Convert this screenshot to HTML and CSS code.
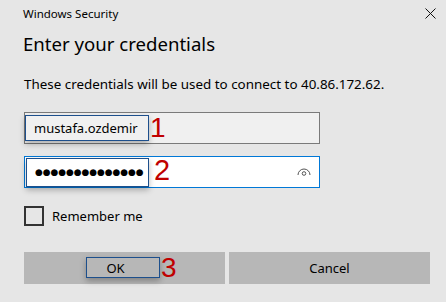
FILE: index.html
```html
<!DOCTYPE html>
<html>
<head>
  <meta charset="utf-8">
  <title>Windows Security</title>
  <link rel="stylesheet" href="styles.css">
</head>
<body>
  <div class="dialog">
    <div class="titlebar">
      <span>Windows Security</span>
      <svg class="close" width="11" height="11" viewBox="0 0 11 11">
        <path d="M0.5 0.5 L10.5 10.5 M10.5 0.5 L0.5 10.5" stroke="#111" stroke-width="1"/>
      </svg>
    </div>

    <h1>Enter your credentials</h1>
    <p class="msg">These credentials will be used to connect to 40.86.172.62.</p>

    <div class="field user">
      <span class="value">mustafa.ozdemir</span>
      <span class="mark mark-user"></span>
      <span class="num num-1">1</span>
    </div>

    <div class="field pass">
      <span class="value dots">&#9679;&#9679;&#9679;&#9679;&#9679;&#9679;&#9679;&#9679;&#9679;&#9679;&#9679;&#9679;&#9679;&#9679;</span>
      <svg class="eye" width="14" height="9" viewBox="0 0 14 9">
        <path d="M1 8 A6 6 0 0 1 13 8" fill="none" stroke="#555" stroke-width="1"/>
        <circle cx="7" cy="6.5" r="1.8" fill="none" stroke="#555" stroke-width="1"/>
      </svg>
      <span class="mark mark-pass"></span>
      <span class="num num-2">2</span>
    </div>

    <label class="remember">
      <span class="box"></span>
      Remember me
    </label>

    <div class="buttons">
      <button class="btn ok">OK
        <span class="mark mark-ok"></span>
        <span class="num num-3">3</span>
      </button>
      <button class="btn">Cancel</button>
    </div>
  </div>
</body>
</html>
```

FILE: styles.css
```css
html, body {
  margin: 0;
  padding: 0;
}

body {
  background-color: #e6e6e6;
  color: #000;
  font-family: 'Noto Sans', 'Open Sans', sans-serif;
}

* {
  box-sizing: border-box;
}

.dialog {
  width: 446px;
  height: 302px;
  padding: 0 16px 0 24px;
}

.titlebar {
  align-items: center;
  display: flex;
  font-size: 11.5px;
  height: 26px;
  justify-content: space-between;
  margin-left: -1px;
  margin-right: -6px;
}

h1 {
  font-size: 18.6px;
  font-weight: 400;
  line-height: 28px;
  margin: 4px 0 0 -1px;
}

.msg {
  font-size: 13.4px;
  line-height: 18px;
  margin: 17px 0 0;
}

.field {
  align-items: center;
  display: flex;
  height: 32px;
  position: relative;
  width: 296px;
}

.field.user {
  background: #f0f0f0;
  border: 1px solid #7a7a7a;
  font-size: 13px;
  margin-top: 19px;
  padding-left: 9px;
}

.field.pass {
  background: #fff;
  border: 1px solid #0078d7;
  margin-top: 12px;
  padding: 0 8px 0 10px;
}

.dots {
  font-family: 'DejaVu Sans', sans-serif;
  font-size: 8.9px;
}

.eye {
  margin-left: auto;
  margin-top: -1px;
}

.mark {
  border: 1px solid #1d4f8c;
  box-shadow: 0 3px 6px rgba(0, 0, 0, 0.28);
  position: absolute;
}

.mark-user {
  height: 26px;
  left: 0;
  top: 2px;
  width: 124px;
}

.mark-pass {
  height: 29px;
  left: 1px;
  top: 1px;
  width: 123px;
}

.num {
  color: #c00000;
  font-family: 'Liberation Sans', sans-serif;
  font-size: 28px;
  line-height: 28px;
  position: absolute;
}

.num-1 {
  left: 125px;
  top: 1px;
}

.num-2 {
  left: 129px;
  top: -1px;
  font-size: 29px;
}

.remember {
  align-items: center;
  display: flex;
  font-size: 13px;
  gap: 8px;
  height: 20px;
  margin-top: 18px;
}

.box {
  border: 2px solid #333;
  height: 20px;
  width: 20px;
}

.buttons {
  display: grid;
  gap: 4px;
  grid-template-columns: 1fr 1fr;
  margin-top: 26px;
}

.btn {
  background: #b7b7b7;
  border: 0;
  color: #000;
  font-family: 'Noto Sans', 'Open Sans', sans-serif;
  font-size: 13px;
  height: 32px;
  padding: 0;
  position: relative;
}

.btn.ok {
  padding-right: 18px;
}

.mark-ok {
  height: 21px;
  left: 62px;
  top: 5px;
  width: 74px;
}

.num-3 {
  left: 137px;
  top: 2px;
}
```
